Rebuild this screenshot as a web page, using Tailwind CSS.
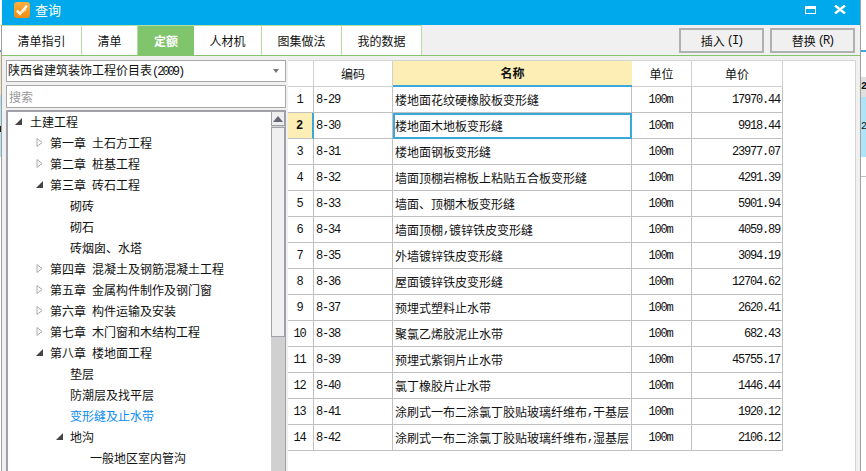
<!DOCTYPE html>
<html>
<head>
<meta charset="utf-8">
<script src="https://cdn.jsdelivr.net/npm/@tailwindcss/browser@4"></script>
</head>
<body class="m-0 overflow-hidden">
<div class="relative w-[866px] h-[471px] overflow-hidden bg-white font-['Noto_Sans_CJK_SC','Noto_Sans_CJK_JP',sans-serif] text-[12px] text-[#111]">
  <!-- window -->
  <div class="absolute left-[2px] top-0 w-[859px] h-[471px] flex flex-col bg-[#f0f0f0] border-r border-[#a0a0a0]">
    <div class="h-[25px] shrink-0 bg-[#00a8ec] flex items-center pl-[12px] pb-[6px] text-white">
      <svg width="16" height="16" viewBox="0 0 16 16"><defs><linearGradient id="g" x1="0" y1="0" x2="0" y2="1"><stop offset="0" stop-color="#fbb040"/><stop offset="1" stop-color="#f08a10"/></linearGradient></defs><rect width="16" height="16" rx="3" fill="url(#g)"/><path d="M3 8.5L6 12L13 3.5" fill="none" stroke="#fff" stroke-width="2.4"/><path d="M5 12.5L12 7" stroke="#ffe8c8" stroke-width="1.6"/></svg>
      <span class="ml-[5px] text-[13px]">查询</span>
      <div class="ml-auto flex items-center mr-[14px] gap-[18px]">
        <span class="block w-[11px] h-[8px] border border-white border-t-[3px]"></span>
        <svg width="12" height="9" viewBox="0 0 12 9"><path d="M1 0.5l10 8M11 0.5l-10 8" stroke="#fff" stroke-width="2.4"/></svg>
      </div>
    </div>
    <div class="h-[31px] shrink-0 flex border-b border-[#85c46c]">
      <div class="flex bg-white border-t border-[#b5dea5]">
        <div class="w-[80px] flex items-center justify-center border-r border-[#b5dea5]">清单指引</div>
        <div class="w-[56px] flex items-center justify-center border-r border-[#b5dea5]">清单</div>
        <div class="w-[56px] flex items-center justify-center bg-[#80c46c] text-white font-bold">定额</div>
        <div class="w-[68px] flex items-center justify-center border-r border-[#b5dea5]">人材机</div>
        <div class="w-[80px] flex items-center justify-center border-r border-[#b5dea5]">图集做法</div>
        <div class="w-[80px] flex items-center justify-center border-r border-[#b5dea5]">我的数据</div>
      </div>
      <div class="ml-auto flex items-start gap-[6px] pr-[5px] pt-[3px]">
        <div class="w-[85px] h-[25px] border-2 border-[#b0b0b0] flex items-center justify-center">插入<span class="font-['Liberation_Mono'] tracking-[-2px] ml-[2px]">(I)</span></div>
        <div class="w-[85px] h-[25px] border-2 border-[#b0b0b0] flex items-center justify-center">替换<span class="font-['Liberation_Mono'] tracking-[-2px] ml-[2px]">(R)</span></div>
      </div>
    </div>
    <div class="flex-1 min-h-0 flex pt-[4px] pl-[4px] pr-[4px]">
      <!-- left -->
      <div class="w-[280px] shrink-0 flex flex-col">
        <div class="h-[22px] border border-[#a8a8a8] bg-white flex items-center pl-[1px] pr-[6px]">
          <span>陕西省建筑装饰工程价目表<span class="font-['Liberation_Mono'] tracking-[-2px]">(2009)</span></span>
          <span class="ml-auto w-0 h-0 border-x-[3px] border-x-transparent border-t-[4px] border-t-[#777]"></span>
        </div>
        <div class="mt-[3px] h-[23px] border border-[#a8a8a8] bg-white flex items-center pl-[2px] text-[#999]">搜索</div>
        <div class="mt-[2px] flex-1 min-h-0 border-t-2 border-l-2 border-r border-[#a0a0a8] bg-white flex overflow-hidden">
          <div class="flex-1 min-w-0 -mt-[1px] leading-[21px] whitespace-nowrap">
            <div class="h-[21px] pl-[7px] flex items-center"><svg class="mr-[8px]" width="7" height="7" viewBox="0 0 7 7"><path d="M0 7L7 0V7Z" fill="#444"/></svg>土建工程</div>
            <div class="h-[21px] pl-[28px] flex items-center"><svg class="mr-[7px]" width="7" height="9" viewBox="0 0 7 9"><path d="M1 .5L6 4.5L1 8.5Z" fill="#fff" stroke="#aaa"/></svg><span>第一章</span><span class="ml-[6px]">土石方工程</span></div>
            <div class="h-[21px] pl-[28px] flex items-center"><svg class="mr-[7px]" width="7" height="9" viewBox="0 0 7 9"><path d="M1 .5L6 4.5L1 8.5Z" fill="#fff" stroke="#aaa"/></svg><span>第二章</span><span class="ml-[6px]">桩基工程</span></div>
            <div class="h-[21px] pl-[28px] flex items-center"><svg class="mr-[7px]" width="7" height="7" viewBox="0 0 7 7"><path d="M0 7L7 0V7Z" fill="#444"/></svg><span>第三章</span><span class="ml-[6px]">砖石工程</span></div>
            <div class="h-[21px] pl-[62px]">砌砖</div>
            <div class="h-[21px] pl-[62px]">砌石</div>
            <div class="h-[21px] pl-[62px]">砖烟囱、水塔</div>
            <div class="h-[21px] pl-[28px] flex items-center"><svg class="mr-[7px]" width="7" height="9" viewBox="0 0 7 9"><path d="M1 .5L6 4.5L1 8.5Z" fill="#fff" stroke="#aaa"/></svg><span>第四章</span><span class="ml-[6px]">混凝土及钢筋混凝土工程</span></div>
            <div class="h-[21px] pl-[28px] flex items-center"><svg class="mr-[7px]" width="7" height="9" viewBox="0 0 7 9"><path d="M1 .5L6 4.5L1 8.5Z" fill="#fff" stroke="#aaa"/></svg><span>第五章</span><span class="ml-[6px]">金属构件制作及钢门窗</span></div>
            <div class="h-[21px] pl-[28px] flex items-center"><svg class="mr-[7px]" width="7" height="9" viewBox="0 0 7 9"><path d="M1 .5L6 4.5L1 8.5Z" fill="#fff" stroke="#aaa"/></svg><span>第六章</span><span class="ml-[6px]">构件运输及安装</span></div>
            <div class="h-[21px] pl-[28px] flex items-center"><svg class="mr-[7px]" width="7" height="9" viewBox="0 0 7 9"><path d="M1 .5L6 4.5L1 8.5Z" fill="#fff" stroke="#aaa"/></svg><span>第七章</span><span class="ml-[6px]">木门窗和木结构工程</span></div>
            <div class="h-[21px] pl-[28px] flex items-center"><svg class="mr-[7px]" width="7" height="7" viewBox="0 0 7 7"><path d="M0 7L7 0V7Z" fill="#444"/></svg><span>第八章</span><span class="ml-[6px]">楼地面工程</span></div>
            <div class="h-[21px] pl-[62px]">垫层</div>
            <div class="h-[21px] pl-[62px]">防潮层及找平层</div>
            <div class="h-[21px] pl-[62px] text-[#0a8cf0]">变形缝及止水带</div>
            <div class="h-[21px] pl-[48px] flex items-center"><svg class="mr-[7px]" width="7" height="7" viewBox="0 0 7 7"><path d="M0 7L7 0V7Z" fill="#444"/></svg>地沟</div>
            <div class="h-[21px] pl-[82px]">一般地区室内管沟</div>
          </div>
          <div class="w-[14px] shrink-0 bg-[#d0d0d0] flex flex-col">
            <div class="h-[14px] bg-[#eeeeee] border-x border-b border-[#a0a0a8] flex items-center justify-center">
              <span class="w-0 h-0 border-x-[5px] border-x-transparent border-b-[6px] border-b-[#667]"></span>
            </div>
            <div class="h-[210px] mt-[1px] bg-[#f0f0f0] border border-[#a0a0a8]"></div>
          </div>
        </div>
      </div>
      <!-- table -->
      <div class="ml-[2px] flex-1 min-w-0 bg-white border-r border-t border-[#d4d4d4] whitespace-nowrap">
        <div class="grid grid-cols-[26px_79px_239px_60px_91px] w-[495px] auto-rows-[26px]">
          <div class="border-r border-b border-[#d0d0d0]"></div>
          <div class="border-r border-b border-[#d0d0d0] flex items-center justify-center">编码</div>
          <div class="bg-[#fdeeb5] border-b-2 border-[#3aa8d8] flex items-center justify-center font-bold">名称</div>
          <div class="border-r border-b border-[#d0d0d0] flex items-center justify-center">单位</div>
          <div class="border-r border-b border-[#d0d0d0] flex items-center justify-center">单价</div>

          <div class="border-r border-b border-[#c0c0c0] flex items-center justify-center pr-[2px] font-['Liberation_Mono'] tracking-[-1.2px]">1</div>
          <div class="border-r border-b border-[#c0c0c0] flex items-center pl-[2px] font-['Liberation_Mono'] tracking-[-1.2px]">8-29</div>
          <div class="border-r border-b border-[#c0c0c0] flex items-center pl-[2px]">楼地面花纹硬橡胶板变形缝</div>
          <div class="border-r border-b border-[#c0c0c0] flex items-center justify-center pr-[2px] font-['Liberation_Mono'] tracking-[-1.2px]">100m</div>
          <div class="border-r border-b border-[#c0c0c0] flex items-center justify-end pr-[2px] font-['Liberation_Mono'] tracking-[-1.2px]">17970.44</div>

          <div class="bg-[#fdeeb5] border-r-2 border-b border-r-[#3aa8d8] border-b-[#c0c0c0] flex items-center justify-center pr-[2px] font-['Liberation_Mono'] font-bold tracking-[-1.2px]">2</div>
          <div class="border-r border-b border-[#c0c0c0] flex items-center pl-[2px] font-['Liberation_Mono'] tracking-[-1.2px]">8-30</div>
          <div class="border-2 border-[#3aa8d8] flex items-center pl-[0px]">楼地面木地板变形缝</div>
          <div class="border-r border-b border-[#c0c0c0] flex items-center justify-center pr-[2px] font-['Liberation_Mono'] tracking-[-1.2px]">100m</div>
          <div class="border-r border-b border-[#c0c0c0] flex items-center justify-end pr-[2px] font-['Liberation_Mono'] tracking-[-1.2px]">9918.44</div>

          <div class="border-r border-b border-[#c0c0c0] flex items-center justify-center pr-[2px] font-['Liberation_Mono'] tracking-[-1.2px]">3</div>
          <div class="border-r border-b border-[#c0c0c0] flex items-center pl-[2px] font-['Liberation_Mono'] tracking-[-1.2px]">8-31</div>
          <div class="border-r border-b border-[#c0c0c0] flex items-center pl-[2px]">楼地面钢板变形缝</div>
          <div class="border-r border-b border-[#c0c0c0] flex items-center justify-center pr-[2px] font-['Liberation_Mono'] tracking-[-1.2px]">100m</div>
          <div class="border-r border-b border-[#c0c0c0] flex items-center justify-end pr-[2px] font-['Liberation_Mono'] tracking-[-1.2px]">23977.07</div>

          <div class="border-r border-b border-[#c0c0c0] flex items-center justify-center pr-[2px] font-['Liberation_Mono'] tracking-[-1.2px]">4</div>
          <div class="border-r border-b border-[#c0c0c0] flex items-center pl-[2px] font-['Liberation_Mono'] tracking-[-1.2px]">8-32</div>
          <div class="border-r border-b border-[#c0c0c0] flex items-center pl-[2px]">墙面顶棚岩棉板上粘贴五合板变形缝</div>
          <div class="border-r border-b border-[#c0c0c0] flex items-center justify-center pr-[2px] font-['Liberation_Mono'] tracking-[-1.2px]">100m</div>
          <div class="border-r border-b border-[#c0c0c0] flex items-center justify-end pr-[2px] font-['Liberation_Mono'] tracking-[-1.2px]">4291.39</div>

          <div class="border-r border-b border-[#c0c0c0] flex items-center justify-center pr-[2px] font-['Liberation_Mono'] tracking-[-1.2px]">5</div>
          <div class="border-r border-b border-[#c0c0c0] flex items-center pl-[2px] font-['Liberation_Mono'] tracking-[-1.2px]">8-33</div>
          <div class="border-r border-b border-[#c0c0c0] flex items-center pl-[2px]">墙面、顶棚木板变形缝</div>
          <div class="border-r border-b border-[#c0c0c0] flex items-center justify-center pr-[2px] font-['Liberation_Mono'] tracking-[-1.2px]">100m</div>
          <div class="border-r border-b border-[#c0c0c0] flex items-center justify-end pr-[2px] font-['Liberation_Mono'] tracking-[-1.2px]">5901.94</div>

          <div class="border-r border-b border-[#c0c0c0] flex items-center justify-center pr-[2px] font-['Liberation_Mono'] tracking-[-1.2px]">6</div>
          <div class="border-r border-b border-[#c0c0c0] flex items-center pl-[2px] font-['Liberation_Mono'] tracking-[-1.2px]">8-34</div>
          <div class="border-r border-b border-[#c0c0c0] flex items-center pl-[2px] whitespace-pre">墙面顶棚<span class="font-['Liberation_Mono'] tracking-[-1.2px]">,</span>镀锌铁皮变形缝</div>
          <div class="border-r border-b border-[#c0c0c0] flex items-center justify-center pr-[2px] font-['Liberation_Mono'] tracking-[-1.2px]">100m</div>
          <div class="border-r border-b border-[#c0c0c0] flex items-center justify-end pr-[2px] font-['Liberation_Mono'] tracking-[-1.2px]">4059.89</div>

          <div class="border-r border-b border-[#c0c0c0] flex items-center justify-center pr-[2px] font-['Liberation_Mono'] tracking-[-1.2px]">7</div>
          <div class="border-r border-b border-[#c0c0c0] flex items-center pl-[2px] font-['Liberation_Mono'] tracking-[-1.2px]">8-35</div>
          <div class="border-r border-b border-[#c0c0c0] flex items-center pl-[2px]">外墙镀锌铁皮变形缝</div>
          <div class="border-r border-b border-[#c0c0c0] flex items-center justify-center pr-[2px] font-['Liberation_Mono'] tracking-[-1.2px]">100m</div>
          <div class="border-r border-b border-[#c0c0c0] flex items-center justify-end pr-[2px] font-['Liberation_Mono'] tracking-[-1.2px]">3094.19</div>

          <div class="border-r border-b border-[#c0c0c0] flex items-center justify-center pr-[2px] font-['Liberation_Mono'] tracking-[-1.2px]">8</div>
          <div class="border-r border-b border-[#c0c0c0] flex items-center pl-[2px] font-['Liberation_Mono'] tracking-[-1.2px]">8-36</div>
          <div class="border-r border-b border-[#c0c0c0] flex items-center pl-[2px]">屋面镀锌铁皮变形缝</div>
          <div class="border-r border-b border-[#c0c0c0] flex items-center justify-center pr-[2px] font-['Liberation_Mono'] tracking-[-1.2px]">100m</div>
          <div class="border-r border-b border-[#c0c0c0] flex items-center justify-end pr-[2px] font-['Liberation_Mono'] tracking-[-1.2px]">12704.62</div>

          <div class="border-r border-b border-[#c0c0c0] flex items-center justify-center pr-[2px] font-['Liberation_Mono'] tracking-[-1.2px]">9</div>
          <div class="border-r border-b border-[#c0c0c0] flex items-center pl-[2px] font-['Liberation_Mono'] tracking-[-1.2px]">8-37</div>
          <div class="border-r border-b border-[#c0c0c0] flex items-center pl-[2px]">预埋式塑料止水带</div>
          <div class="border-r border-b border-[#c0c0c0] flex items-center justify-center pr-[2px] font-['Liberation_Mono'] tracking-[-1.2px]">100m</div>
          <div class="border-r border-b border-[#c0c0c0] flex items-center justify-end pr-[2px] font-['Liberation_Mono'] tracking-[-1.2px]">2620.41</div>

          <div class="border-r border-b border-[#c0c0c0] flex items-center justify-center pr-[2px] font-['Liberation_Mono'] tracking-[-1.2px]">10</div>
          <div class="border-r border-b border-[#c0c0c0] flex items-center pl-[2px] font-['Liberation_Mono'] tracking-[-1.2px]">8-38</div>
          <div class="border-r border-b border-[#c0c0c0] flex items-center pl-[2px]">聚氯乙烯胶泥止水带</div>
          <div class="border-r border-b border-[#c0c0c0] flex items-center justify-center pr-[2px] font-['Liberation_Mono'] tracking-[-1.2px]">100m</div>
          <div class="border-r border-b border-[#c0c0c0] flex items-center justify-end pr-[2px] font-['Liberation_Mono'] tracking-[-1.2px]">682.43</div>

          <div class="border-r border-b border-[#c0c0c0] flex items-center justify-center pr-[2px] font-['Liberation_Mono'] tracking-[-1.2px]">11</div>
          <div class="border-r border-b border-[#c0c0c0] flex items-center pl-[2px] font-['Liberation_Mono'] tracking-[-1.2px]">8-39</div>
          <div class="border-r border-b border-[#c0c0c0] flex items-center pl-[2px]">预埋式紫铜片止水带</div>
          <div class="border-r border-b border-[#c0c0c0] flex items-center justify-center pr-[2px] font-['Liberation_Mono'] tracking-[-1.2px]">100m</div>
          <div class="border-r border-b border-[#c0c0c0] flex items-center justify-end pr-[2px] font-['Liberation_Mono'] tracking-[-1.2px]">45755.17</div>

          <div class="border-r border-b border-[#c0c0c0] flex items-center justify-center pr-[2px] font-['Liberation_Mono'] tracking-[-1.2px]">12</div>
          <div class="border-r border-b border-[#c0c0c0] flex items-center pl-[2px] font-['Liberation_Mono'] tracking-[-1.2px]">8-40</div>
          <div class="border-r border-b border-[#c0c0c0] flex items-center pl-[2px]">氯丁橡胶片止水带</div>
          <div class="border-r border-b border-[#c0c0c0] flex items-center justify-center pr-[2px] font-['Liberation_Mono'] tracking-[-1.2px]">100m</div>
          <div class="border-r border-b border-[#c0c0c0] flex items-center justify-end pr-[2px] font-['Liberation_Mono'] tracking-[-1.2px]">1446.44</div>

          <div class="border-r border-b border-[#c0c0c0] flex items-center justify-center pr-[2px] font-['Liberation_Mono'] tracking-[-1.2px]">13</div>
          <div class="border-r border-b border-[#c0c0c0] flex items-center pl-[2px] font-['Liberation_Mono'] tracking-[-1.2px]">8-41</div>
          <div class="border-r border-b border-[#c0c0c0] flex items-center pl-[2px] overflow-hidden whitespace-pre">涂刷式一布二涂氯丁胶贴玻璃纤维布<span class="font-['Liberation_Mono'] tracking-[-1.2px]">,</span>干基层</div>
          <div class="border-r border-b border-[#c0c0c0] flex items-center justify-center pr-[2px] font-['Liberation_Mono'] tracking-[-1.2px]">100m</div>
          <div class="border-r border-b border-[#c0c0c0] flex items-center justify-end pr-[2px] font-['Liberation_Mono'] tracking-[-1.2px]">1920.12</div>

          <div class="border-r border-b border-[#c0c0c0] flex items-center justify-center pr-[2px] font-['Liberation_Mono'] tracking-[-1.2px]">14</div>
          <div class="border-r border-b border-[#c0c0c0] flex items-center pl-[2px] font-['Liberation_Mono'] tracking-[-1.2px]">8-42</div>
          <div class="border-r border-b border-[#c0c0c0] flex items-center pl-[2px] overflow-hidden whitespace-pre">涂刷式一布二涂氯丁胶贴玻璃纤维布<span class="font-['Liberation_Mono'] tracking-[-1.2px]">,</span>湿基层</div>
          <div class="border-r border-b border-[#c0c0c0] flex items-center justify-center pr-[2px] font-['Liberation_Mono'] tracking-[-1.2px]">100m</div>
          <div class="border-r border-b border-[#c0c0c0] flex items-center justify-end pr-[2px] font-['Liberation_Mono'] tracking-[-1.2px]">2106.12</div>
        </div>
      </div>
    </div>
  </div>
  <!-- desktop slivers behind the dialog, left edge -->
  <div class="absolute left-[1px] top-[25px] w-[1px] h-[446px] bg-[#a0a0a0]"></div>
  <div class="absolute left-0 top-[50px] w-[1px] h-[2px] bg-[#3ea8dc]"></div>
  <div class="absolute left-0 top-[52px] w-[1px] h-[43px] bg-[#f5e6c0]"></div>
  <div class="absolute left-0 top-[95px] w-[1px] h-[62px] bg-[#aee4f8]"></div>
  <div class="absolute left-0 top-[126px] w-[1px] h-[6px] bg-[#222]"></div>
  <!-- desktop slivers behind the dialog, right edge -->
  <div class="absolute left-[861px] top-[50px] w-[5px] h-[2px] bg-[#3ea8dc]"></div>
  <div class="absolute left-[861px] top-[77px] w-[5px] h-[20px] bg-[#e0e0e0] font-['Liberation_Mono'] font-bold text-[10px] tracking-[-1px] leading-[20px]">2</div>
  <div class="absolute left-[861px] top-[97px] w-[5px] h-[60px] bg-[#aee4f8] font-['Liberation_Mono'] text-[10px] tracking-[-1px] leading-[60px]">2</div>
  <div class="absolute left-[861px] top-[176px] w-[5px] h-[1px] bg-[#c0c0c0]"></div>
</div>
</body>
</html>
